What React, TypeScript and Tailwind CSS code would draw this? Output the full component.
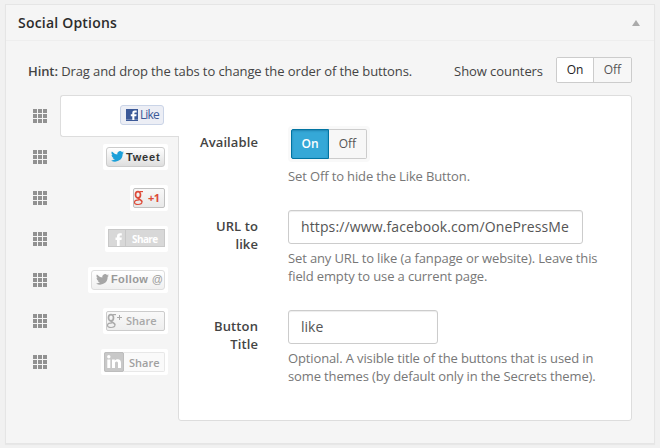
import type { ReactNode } from "react";

function DragHandle() {
  return (
    <div className="grid w-[14px] shrink-0 grid-cols-3 gap-px">
      {Array.from({ length: 9 }, (_, i) => (
        <span key={i} className="size-1 bg-[#919191]" />
      ))}
    </div>
  );
}

function FacebookMark() {
  return (
    <svg width="12" height="12" viewBox="0 0 12 12" className="shrink-0">
      <rect width="12" height="12" fill="#3b5998" />
      <rect y="10" width="12" height="1" fill="#6d84b4" />
      <path d="M6.3 11V7.200H4.800V5.300h1.500V4.100C6.300 2.400 7.200 1.600 8.800 1.600h1.900v1.900H9.400c-.8 0-1 .3-1 .9v.9h2.200l-.3 1.900H8.400V11z" fill="#fff" />
    </svg>
  );
}

function TwitterBird({ className }: { className: string }) {
  return (
    <svg width="13" height="11" viewBox="0 0 24 20" className={className} fill="currentColor">
      <path d="M24 2.4a10 10 0 0 1-2.8.8A5 5 0 0 0 23.300.400a10 10 0 0 1-3.100 1.200A4.900 4.900 0 0 0 11.800 6.100 14 14 0 0 1 1.700.900a4.900 4.900 0 0 0 1.500 6.600A4.900 4.900 0 0 1 1 6.900a4.900 4.900 0 0 0 3.900 4.900 5 5 0 0 1-2.200.100 4.900 4.900 0 0 0 4.600 3.400A9.900 9.900 0 0 1 0 17.300 14 14 0 0 0 21.500 4.900 10 10 0 0 0 24 2.400z" />
    </svg>
  );
}

function GoogleG() {
  return (
    <svg width="10" height="16" viewBox="0 0 10 16" className="shrink-0" fill="none" stroke="currentColor">
      <ellipse cx="4" cy="4.700" rx="2.500" ry="3.100" strokeWidth="1.700" />
      <path d="M5.500 1.600H9" strokeWidth="1.200" />
      <path d="M4.800 7.700C3 9.300 7.800 9.500 8 11.800" strokeWidth="1.800" />
      <path d="M8 11.800c0 1.900-1.800 2.700-4 2.700-2 0-3.500-.7-3.500-2.300 0-1.700 1.900-2.400 4.600-2.400" strokeWidth="1.200" />
    </svg>
  );
}

function LinkedInMark() {
  return (
    <svg width="20" height="20" viewBox="0 0 20 20" className="shrink-0">
      <rect width="20" height="20" rx="2" fill="#c8c8c8" />
      <rect x="0.500" y="0.500" width="19" height="19" rx="1.500" fill="none" stroke="#bdbdbd" />
      <g fill="#fff">
        <circle cx="4.800" cy="4.800" r="1.700" />
        <path d="M3.300 7.500h3V16h-3zM8 7.500h2.800v1.200c.6-1 1.500-1.500 2.900-1.500 2.300 0 3.300 1.500 3.300 3.900V16h-3v-4.500c0-1.200-.4-1.900-1.400-1.900s-1.600.7-1.600 1.900V16H8z" />
      </g>
    </svg>
  );
}

function Frame({ children }: { children: ReactNode }) {
  return <div className="flex h-[26px] items-start rounded-[2px] bg-white p-[3px]">{children}</div>;
}

function TabRow({ children }: { children: ReactNode }) {
  return (
    <div className="flex h-[41px] items-center justify-between pr-[10px] pl-[5px]">
      <DragHandle />
      {children}
    </div>
  );
}

function Field({ label, children }: { label: string; children: ReactNode }) {
  return (
    <div className="flex">
      <div className="mt-[7px] ml-[15px] w-[64px] shrink-0 text-right font-semibold leading-[18px] tracking-[0.1px] text-[#444]">
        {label}
      </div>
      <div className="ml-[30px] w-[320px]">{children}</div>
    </div>
  );
}

function Help({ children }: { children: ReactNode }) {
  return <p className="mt-[5px] leading-[18px] tracking-[-0.13px] text-[#777]">{children}</p>;
}

export default function App() {
  return (
    <div className="h-[448px] w-[660px] overflow-hidden bg-[#f1f1f1] pt-1 pl-[5px] font-['Open_Sans',sans-serif] text-[13px] text-[#444]">
      <div className="h-[440px] w-[650px] border border-[#e5e5e5] bg-[#f5f5f5] shadow-[0_1px_1px_rgba(0,0,0,0.04)]">
        <header className="flex h-[36px] items-center justify-between border-b border-[#eee] pr-[14px] pl-3">
          <h2 className="text-[14px] font-semibold tracking-[0.2px] text-[#2c2c2c]">Social Options</h2>
          <svg width="8" height="6" viewBox="0 0 8 6" fill="#aaa">
            <path d="M4 0l4 6H0z" />
          </svg>
        </header>

        <div className="flex h-[54px] items-center justify-between pr-[22px] pl-[22px]">
          <p className="mt-[8px] tracking-[-0.1px]">
            <span className="font-semibold">Hint:</span> Drag and drop the tabs to change the order of the buttons.
          </p>
          <div className="flex items-center">
            <span className="mt-[8px] mr-[13px] tracking-[-0.07px]">Show counters</span>
            <div className="mt-1 flex h-[26px] w-[76px] overflow-hidden rounded-[2px] border border-[#ccc] text-[12px]">
              <div className="flex w-[37px] items-center justify-center border-r border-[#ccc] bg-white text-[#222]">On</div>
              <div className="flex flex-1 items-center justify-center bg-[#f7f7f7] text-[#555]">Off</div>
            </div>
          </div>
        </div>

        <div className="flex pl-[22px]">
          <div className="w-[150px] shrink-0">
            <div className="-mr-px -mb-px flex h-[42px] items-center">
              <div className="ml-[5px]">
                <DragHandle />
              </div>
              <div className="relative z-10 ml-[13px] flex h-[42px] flex-1 items-start justify-end rounded-l-[3px] border border-r-0 border-[#ddd] bg-white pt-[9px] pr-[15px]">
                <div className="flex h-[20px] w-[44px] items-center rounded-[3px] border border-[#cad4e7] bg-[#eceef5] pl-[5px] text-[12px] leading-none tracking-[-0.9px] text-[#3b5998]">
                  <FacebookMark />
                  <span className="ml-[2px]">Like</span>
                </div>
              </div>
            </div>
            <TabRow>
              <Frame>
                <div className="flex h-[20px] w-[59px] items-center rounded-[3px] border border-[#ccc] bg-gradient-to-b from-white to-[#dedede] pl-[4px] font-['Liberation_Sans',sans-serif] text-[11px] font-bold leading-none text-[#333]">
                  <TwitterBird className="shrink-0 text-[#1b9fd8]" />
                  <span className="mt-px ml-[2px] tracking-[0.8px]">Tweet</span>
                </div>
              </Frame>
            </TabRow>
            <TabRow>
              <Frame>
                <div className="flex h-[20px] w-[32px] items-center rounded-[2px] border border-[#c0c0c0] bg-gradient-to-b from-[#f8f8f8] to-[#e8e8e8] leading-none text-[#dd4b39]">
                  <GoogleG />
                  <span className="ml-[4px] text-[11px] font-bold tracking-[-0.5px]">+1</span>
                </div>
              </Frame>
            </TabRow>
            <TabRow>
              <Frame>
                <div className="flex h-[18px] w-[57px] border border-[#c8c8c8] bg-[#d8d8d8] text-white">
                  <div className="flex w-[17px] items-end justify-center border-r border-[#c8c8c8] pl-[3px]">
                    <svg width="8" height="13" viewBox="0 0 8 13" fill="#fff">
                      <path d="M2 13V7H.500V4.500H2V3.300C2 1.200 3.200.200 5 .200h1.800v2.400H5.600c-.7 0-.9.300-.9.900v1h2.100L6.500 7H4.700v6z" />
                    </svg>
                  </div>
                  <span className="ml-[6px] text-[10px] font-bold leading-[18px] tracking-[-0.6px]">Share</span>
                </div>
              </Frame>
            </TabRow>
            <TabRow>
              <Frame>
                <div className="flex h-[20px] w-[74px] items-center rounded-[3px] border border-[#ddd] bg-gradient-to-b from-white to-[#f0f0f0] pl-[4px] font-['Liberation_Sans',sans-serif] text-[11px] font-bold leading-none text-[#999]">
                  <TwitterBird className="shrink-0 text-[#a6a6a6]" />
                  <span className="ml-[2px] tracking-[0.4px]">
                    Follow <span className="font-normal">@</span>
                  </span>
                </div>
              </Frame>
            </TabRow>
            <TabRow>
              <Frame>
                <div className="flex h-[20px] w-[59px] items-center rounded-[2px] border border-[#ccc] bg-gradient-to-b from-[#f9f9f9] to-[#eee] leading-none text-[#aaa]">
                  <GoogleG />
                  <svg width="5" height="5" viewBox="0 0 5 5" className="-mt-[6px] shrink-0" fill="currentColor">
                    <path d="M2 0h1v2h2v1H3v2H2V3H0V2h2z" />
                  </svg>
                  <span className="ml-[4px] text-[11px] font-semibold text-[#a8a8a8]">Share</span>
                </div>
              </Frame>
            </TabRow>
            <TabRow>
              <Frame>
                <div className="flex h-[20px] w-[61px] items-center rounded-[2px] bg-[#fafafa] text-[11px] font-semibold leading-none text-[#a0a0a0]">
                  <LinkedInMark />
                  <div className="flex h-[20px] flex-1 items-center rounded-r-[2px] border border-l-0 border-[#e8e8e8] pt-[2px] pl-[5px]">Share</div>
                </div>
              </Frame>
            </TabRow>
          </div>

          <div className="h-[326px] w-[454px] rounded-[3px] rounded-tl-none border border-[#ddd] bg-white pt-[30px]">
            <div className="h-[84px]">
              <Field label="Available">
                <div className="w-[82px] rounded-[4px] bg-[#f9f9f9] p-[3px]">
                  <div className="flex h-[30px] w-[76px] text-[12px]">
                    <div className="flex w-[38px] items-center justify-center rounded-l-[2px] border border-[#0074a2] bg-[#35a8d7] font-semibold text-white shadow-[inset_0_1px_2px_rgba(0,80,120,0.4)]">
                      On
                    </div>
                    <div className="flex w-[38px] items-center justify-center rounded-r-[2px] border border-l-0 border-[#ccc] bg-[#f7f7f7] text-[#555]">
                      Off
                    </div>
                  </div>
                </div>
                <Help>Set Off to hide the Like Button.</Help>
              </Field>
            </div>
            <div className="h-[100px]">
              <Field label="URL to like">
                <input
                  readOnly
                  value="https://www.facebook.com/OnePressMe"
                  className="block h-[34px] w-[295px] rounded-[3px] border border-[#ccc] bg-white px-3 pb-[2px] text-[14px] tracking-[0.12px] text-[#555] shadow-[inset_0_1px_1px_rgba(0,0,0,0.075)] outline-none"
                />
                <Help>Set any URL to like (a fanpage or website). Leave this field empty to use a current page.</Help>
              </Field>
            </div>
            <Field label="Button Title">
              <input
                readOnly
                value="like"
                className="block h-[34px] w-[150px] rounded-[3px] border border-[#ccc] bg-white px-3 pb-[2px] text-[14px] text-[#555] shadow-[inset_0_1px_1px_rgba(0,0,0,0.075)] outline-none"
              />
              <Help>
                Optional. A visible title of the buttons that is used in some themes (by default only in the Secrets theme).
              </Help>
            </Field>
          </div>
        </div>
      </div>
    </div>
  );
}
